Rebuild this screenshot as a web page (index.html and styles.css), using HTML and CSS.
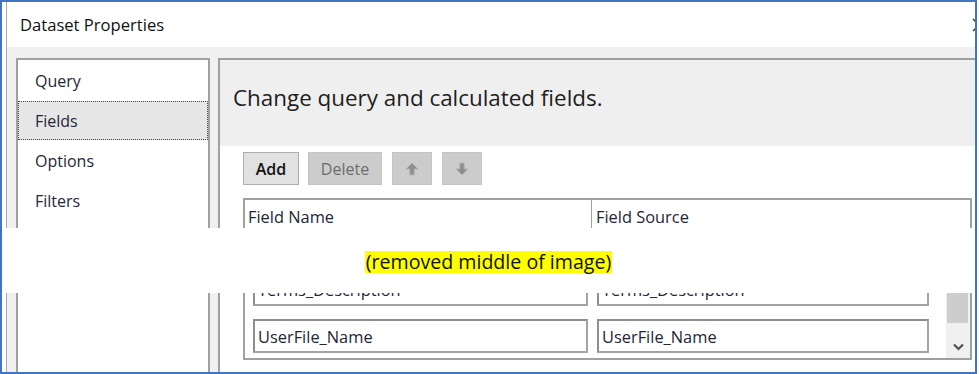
FILE: index.html
```html
<!DOCTYPE html>
<html lang="en">
<head>
    <meta charset="UTF-8">
    <meta name="viewport" content="width=device-width, initial-scale=1.0">
    <title>Dataset Properties</title>
    <link rel="stylesheet" href="styles.css">
</head>
<body>
    <div class="frame">
        <div class="dialog">
            <div class="titlebar">
                <span class="titulo">Dataset Properties</span>
                <svg class="fechar" width="14" height="14" viewBox="0 0 14 14">
                    <path d="M1 1 L13 13 M13 1 L1 13" stroke="#333" stroke-width="1.4" fill="none"/>
                </svg>
            </div>
            <div class="corpo">
                <div class="nav">
                    <div class="item">Query</div>
                    <div class="item ativo">Fields</div>
                    <div class="item">Options</div>
                    <div class="item">Filters</div>
                </div>
                <div class="painel">
                    <div class="cabecalho">Change query and calculated fields.</div>
                    <div class="conteudo">
                        <div class="botoes">
                            <button class="btn add">Add</button>
                            <button class="btn off del">Delete</button>
                            <button class="btn off seta">
                                <svg width="14" height="14" viewBox="0 0 14 14">
                                    <path d="M7 1 L13 7 L9.2 7 L9.2 13 L4.8 13 L4.8 7 L1 7 Z" fill="#8f8f8f" stroke="#b3b3b3" stroke-width="1"/>
                                </svg>
                            </button>
                            <button class="btn off seta">
                                <svg width="14" height="14" viewBox="0 0 14 14">
                                    <path d="M7 13 L13 7 L9.2 7 L9.2 1 L4.8 1 L4.8 7 L1 7 Z" fill="#8f8f8f" stroke="#b3b3b3" stroke-width="1"/>
                                </svg>
                            </button>
                        </div>
                        <div class="grade">
                            <div class="grade-topo">
                                <div class="col1">Field Name</div>
                                <div class="col2">Field Source</div>
                            </div>
                            <div class="grade-corpo">
                                <div class="linhas">
                                    <div class="linha">
                                        <div class="campo c1">Terms_Description</div>
                                        <div class="campo c2">Terms_Description</div>
                                    </div>
                                    <div class="linha">
                                        <div class="campo c1">UserFile_Name</div>
                                        <div class="campo c2">UserFile_Name</div>
                                    </div>
                                </div>
                                <div class="rolagem">
                                    <div class="polegar"></div>
                                    <div class="desce">
                                        <svg width="11" height="8" viewBox="0 0 11 8">
                                            <path d="M1 1.5 L5.5 6 L10 1.5" stroke="#505050" stroke-width="2.2" fill="none"/>
                                        </svg>
                                    </div>
                                </div>
                            </div>
                        </div>
                    </div>
                </div>
            </div>
        </div>
        <div class="corte">
            <span>(removed middle of image)</span>
        </div>
    </div>
</body>
</html>
```

FILE: styles.css
```css
body{
    margin: 0;
    background-color: #fff;
    font-family: "Open Sans", "Noto Sans", sans-serif;
}
.frame{
    position: relative;
    box-sizing: border-box;
    width: 977px;
    height: 374px;
    border: 2px solid #4472c4;
    background-color: #fff;
    display: flex;
    overflow: hidden;
}
.dialog{
    flex: 1;
    margin-left: 4px;
    border-left: 1px solid #a3a8b3;
    display: flex;
    flex-direction: column;
}
.titlebar{
    height: 45px;
    display: flex;
    align-items: center;
    justify-content: space-between;
    padding-left: 13px;
    background-color: #fff;
    overflow: hidden;
}
.titulo{
    font-size: 16.6px;
    color: #111;
}
.fechar{
    margin-right: -11px;
}
.corpo{
    flex: 1;
    display: flex;
    padding-top: 11px;
    padding-left: 9px;
    background-color: #f0f0f0;
}
.nav{
    width: 190px;
    border: 2px solid #a0a0a0;
    border-bottom: none;
    background-color: #fff;
    padding-top: 1px;
}
.item{
    height: 39px;
    margin-bottom: 1px;
    box-sizing: border-box;
    display: flex;
    align-items: center;
    padding-left: 16px;
    font-size: 16px;
    color: #1f2638;
    border: 1px solid transparent;
}
.item.ativo{
    background-color: #e6e6e6;
    border: 1px dotted #444;
}
.painel{
    flex: 1;
    margin-left: 8px;
    border-top: 2px solid #a0a0a0;
    border-left: 2px solid #a0a0a0;
    background-color: #fff;
    display: flex;
    flex-direction: column;
}
.cabecalho{
    height: 86px;
    box-sizing: border-box;
    display: flex;
    align-items: center;
    padding-left: 13px;
    padding-bottom: 11px;
    background-color: #efefef;
    font-size: 22.4px;
    color: #1e1e1e;
}
.conteudo{
    padding: 6px 3px 0 23px;
}
.botoes{
    display: flex;
    gap: 9px;
}
.btn{
    height: 33px;
    box-sizing: border-box;
    padding: 0;
    font-family: inherit;
    font-size: 16px;
    color: #111;
    background-color: #e1e1e1;
    border: 1px solid #adadad;
}
.btn.add{
    width: 56px;
    font-weight: 600;
}
.btn.del{
    width: 74px;
}
.btn.off{
    color: #6d6d6d;
    background-color: #cccccc;
    border-color: #c4c4c4;
}
.btn.seta{
    width: 40px;
    margin-left: 1px;
    display: flex;
    align-items: center;
    justify-content: center;
}
.grade{
    margin-top: 13px;
    height: 162px;
    box-sizing: border-box;
    border: 2px solid #a0a0a0;
    display: flex;
    flex-direction: column;
}
.grade-topo{
    height: 32px;
    display: flex;
    font-size: 16.4px;
    color: #1f2638;
}
.col1{
    width: 347px;
    padding-left: 3px;
    box-sizing: border-box;
    border-right: 1px solid #a0a0a0;
    display: flex;
    align-items: center;
}
.col2{
    padding-left: 4px;
    display: flex;
    align-items: center;
}
.grade-corpo{
    flex: 1;
    display: flex;
}
.linhas{
    flex: 1;
    display: flex;
    flex-direction: column;
    justify-content: flex-end;
    gap: 13px;
    padding-bottom: 5px;
}
.linha{
    display: flex;
}
.campo{
    height: 34px;
    box-sizing: border-box;
    border: 2px solid #a3a3a3;
    border-top-color: #8e8e8e;
    border-left-color: #8e8e8e;
    display: flex;
    align-items: center;
    padding-left: 3px;
    font-size: 16.4px;
    color: #1f2638;
}
.c1{
    width: 335px;
    margin-left: 8px;
}
.c2{
    width: 332px;
    margin-left: 9px;
}
.rolagem{
    width: 24px;
    margin-left: 2px;
    background-color: #f0f0f0;
    display: flex;
    flex-direction: column;
    justify-content: flex-end;
}
.polegar{
    height: 40px;
    margin: 0 2px 12px 1px;
    background-color: #cdcdcd;
}
.desce{
    height: 23px;
    display: flex;
    align-items: center;
    justify-content: center;
}
.corte{
    position: absolute;
    left: 0;
    right: 0;
    top: 226px;
    height: 65px;
    background-color: #fff;
    display: flex;
    justify-content: center;
    align-items: center;
    padding-top: 3px;
    box-sizing: border-box;
}
.corte span{
    background-color: #ffff00;
    font-size: 19.6px;
    line-height: 22px;
    color: #111;
    padding: 0 1px;
}
```
